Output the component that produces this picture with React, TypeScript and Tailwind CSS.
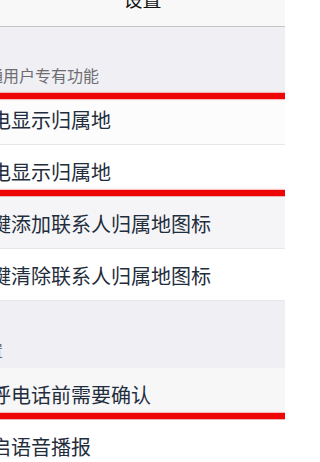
import React from "react";

const font = { fontFamily: '"Noto Sans CJK SC", "Noto Sans", sans-serif' };

function Red({ pos }: { pos: "top" | "bottom" }) {
  return (
    <div
      className={
        "absolute left-0 right-0 h-[6px] bg-[#ee0606] shadow-[0_0_1px_1px_rgba(240,120,120,0.45)] " +
        (pos === "top" ? "top-0" : "bottom-0")
      }
    />
  );
}

function Row({
  text,
  bg,
  red,
}: {
  text: string;
  bg: string;
  red?: "top" | "bottom";
}) {
  return (
    <div className={"relative flex h-[52px] items-center border-b border-[#e6e6ea] " + bg}>
      <span className="-ml-[29px] whitespace-nowrap pt-[3px] text-[20px] leading-[20px] text-[#1f2d3d]">
        {text}
      </span>
      {red && <Red pos={red} />}
    </div>
  );
}

function Section({ label, h }: { label: string; h: string }) {
  return (
    <div className={"flex items-end bg-[#efeff4] pb-[9px] " + h}>
      <span className="-ml-[29px] whitespace-nowrap text-[16px] leading-[18px] text-[#6d6d72]">
        {label}
      </span>
    </div>
  );
}

export default function App() {
  return (
    <div className="relative h-[462px] w-[285px] overflow-hidden bg-white" style={font}>
      <div className="flex h-[27px] justify-center overflow-hidden border-b border-[#c4c4c8] bg-[#f8f8f8]">
        <span className="mt-[-11px] text-[19px] leading-[19px] text-[#111]">设置</span>
      </div>
      <Section label="联通用户专有功能" h="h-[66px]" />
      <Row text="来电显示归属地" bg="bg-[#fcfcfc]" red="top" />
      <Row text="去电显示归属地" bg="bg-white" red="bottom" />
      <Row text="一键添加联系人归属地图标" bg="bg-[#f5f5f7]" />
      <Row text="一键清除联系人归属地图标" bg="bg-white" />
      <Section label="设置" h="h-[67px]" />
      <Row text="外呼电话前需要确认" bg="bg-[#f7f7f8]" red="bottom" />
      <Row text="开启语音播报" bg="bg-white" />
    </div>
  );
}
